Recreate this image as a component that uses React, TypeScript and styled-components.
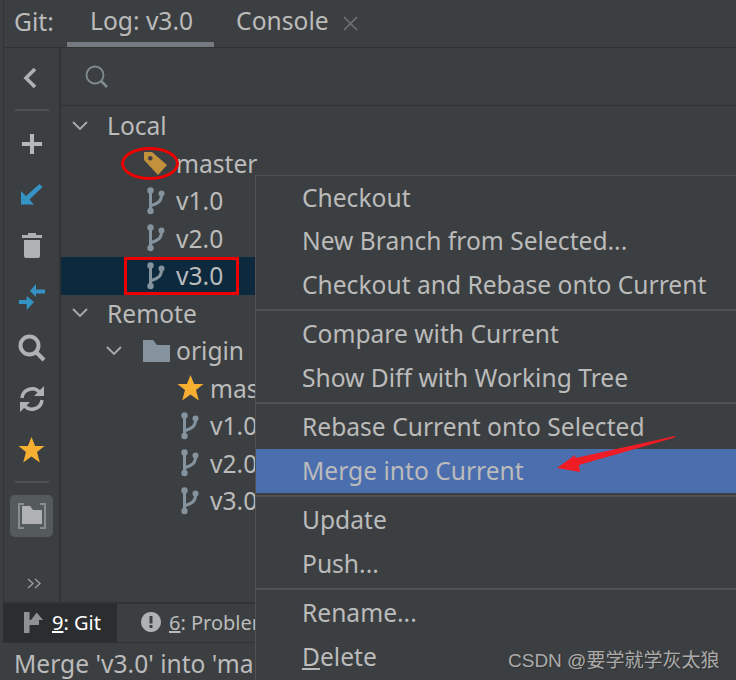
import React from 'react';
import styled, { createGlobalStyle } from 'styled-components';

const uiFont = '"Noto Sans", "Open Sans", sans-serif';

const GlobalStyle = createGlobalStyle`
    html, body {
        margin: 0;
        padding: 0;
        background: #3c3f41;
    }
`;

const BranchIcon = () => (
    <svg width="20" height="28" viewBox="0 0 20 28" fill="#84939e" stroke="none">
        <circle cx="3.500" cy="3.500" r="3.200" />
        <circle cx="3.500" cy="24" r="3.200" />
        <circle cx="14.500" cy="6.500" r="3" />
        <path d="M3.500 4v19" stroke="#84939e" strokeWidth="3" fill="none" />
        <path d="M14.500 8c0 6-3 8-10 10.500" stroke="#84939e" strokeWidth="3" fill="none" />
    </svg>
);

const TagIcon = () => (
    <svg width="24" height="26" viewBox="0 0 24 26">
        <path
            fillRule="evenodd"
            fill="#c2913c"
            d="M1 2h8l15 13-9 10L1 10zM7.300 6a2.300 2.300 0 1 0 .01 0z"
        />
    </svg>
);

const StarIcon = () => (
    <svg width="27" height="26" viewBox="0 0 27 26">
        <path fill="#f7af32" d="M13.500 0l3.600 9h9.400l-7.500 6 2.800 10.500-8.300-6-8.300 6L8 15 .5 9h9.400z" />
    </svg>
);

const FolderIcon = () => (
    <svg width="27" height="22" viewBox="0 0 27 22">
        <path fill="#84939e" d="M0 0h10l4 5h13v17H0z" />
    </svg>
);

const toolbarIcons: Record<string, JSX.Element> = {
    add: (
        <svg width="20" height="20" viewBox="0 0 20 20">
            <path fill="#b4b6b8" d="M8 0h4v8h8v4h-8v8H8v-8H0V8h8z" />
        </svg>
    ),
    checkout: (
        <svg width="22" height="21" viewBox="0 0 22 21">
            <path fill="#3592c4" d="M0 7l5 5L18.500 0l3 3L8.500 15.500 13 20.500H0z" />
        </svg>
    ),
    trash: (
        <svg width="20" height="25" viewBox="0 0 20 25">
            <path fill="#afb1b3" d="M6 0h8v2h6v3H0V2h6zM2 7h16v16a2 2 0 0 1-2 2H4a2 2 0 0 1-2-2z" />
        </svg>
    ),
    merge: (
        <svg width="26" height="26" viewBox="0 0 26 26">
            <path
                fill="#3592c4"
                d="M11 7l6-7v5.500h9v4h-9V13zM15 18l-7.300-6v4H0v4h7.700v6z"
            />
        </svg>
    ),
    search: (
        <svg width="28" height="28" viewBox="0 0 28 28" fill="none" stroke="#afb1b3" strokeWidth="4">
            <circle cx="11.500" cy="11.500" r="9" />
            <path d="M18 18l8 8" />
        </svg>
    ),
    refresh: (
        <svg width="26" height="26" viewBox="0 0 26 26" fill="none" stroke="#afb1b3" strokeWidth="3.500">
            <path d="M3 12A10 10 0 0 1 21 7" />
            <path d="M23 14A10 10 0 0 1 5 19" />
            <path fill="#afb1b3" stroke="none" d="M25 0v10h-10zM1 26V16h10z" />
        </svg>
    ),
    star: <StarIcon />,
};

const toolbarSlots = ['add', 'checkout', 'trash', 'merge', 'search', 'refresh', 'star'];

interface TreeRowData {
    label: string;
    depth: number;
    icon?: 'branch' | 'tag' | 'star' | 'folder';
    chevron?: boolean;
    selected?: boolean;
}

const treeRows: TreeRowData[] = [
    { label: 'Local', depth: 0, chevron: true },
    { label: 'master', depth: 1, icon: 'tag' },
    { label: 'v1.0', depth: 1, icon: 'branch' },
    { label: 'v2.0', depth: 1, icon: 'branch' },
    { label: 'v3.0', depth: 1, icon: 'branch', selected: true },
    { label: 'Remote', depth: 0, chevron: true },
    { label: 'origin', depth: 1, icon: 'folder', chevron: true },
    { label: 'mas', depth: 2, icon: 'star' },
    { label: 'v1.0', depth: 2, icon: 'branch' },
    { label: 'v2.0', depth: 2, icon: 'branch' },
    { label: 'v3.0', depth: 2, icon: 'branch' },
];

const menuGroups: React.ReactNode[][] = [
    ['Checkout', 'New Branch from Selected...', 'Checkout and Rebase onto Current'],
    ['Compare with Current', 'Show Diff with Working Tree'],
    ['Rebase Current onto Selected', 'Merge into Current'],
    ['Update', 'Push...'],
    ['Rename...', <><u>D</u>elete</>],
];

const Tree = () => (
    <TreeList>
        {treeRows.map((row, i) => (
            <TreeRow key={i} selected={row.selected}>
                <Indent depth={row.depth} />
                <ChevronSlot>
                    {row.chevron && (
                        <svg width="16" height="10" viewBox="0 0 16 10" fill="none" stroke="#a9abad" strokeWidth="1.800">
                            <path d="M1 1l7 7 7-7" />
                        </svg>
                    )}
                </ChevronSlot>
                {row.icon && (
                    <IconSlot shift={row.icon === 'branch' ? 6 : 2}>
                        {row.icon === 'branch' && <BranchIcon />}
                        {row.icon === 'tag' && <TagIcon />}
                        {row.icon === 'star' && <StarIcon />}
                        {row.icon === 'folder' && <FolderIcon />}
                    </IconSlot>
                )}
                <TreeLabel>{row.label}</TreeLabel>
            </TreeRow>
        ))}
    </TreeList>
);

const Menu = () => (
    <MenuPanel>
        {menuGroups.map((group, g) => (
            <React.Fragment key={g}>
                {g > 0 && <MenuSeparator />}
                {group.map((item, i) => (
                    <MenuItem key={i} active={item === 'Merge into Current'}>
                        {item}
                    </MenuItem>
                ))}
            </React.Fragment>
        ))}
    </MenuPanel>
);

const Annotations = () => (
    <>
        <Ring />
        <RedBox />
        <ArrowSvg width="120" height="38" viewBox="0 0 120 38">
            <path fill="#ee1c25" d="M118 0L18.500 22 18 19 0 32 23 36 22 29 118 1.500z" />
        </ArrowSvg>
    </>
);

export default function App() {
    return (
        <Page>
            <GlobalStyle />
            <TabBar>
                <TabBarTitle>Git:</TabBarTitle>
                <Tab active>Log: v3.0</Tab>
                <Tab>
                    Console
                    <CloseMark width="15" height="15" viewBox="0 0 15 15" stroke="#6e7072" strokeWidth="1.600">
                        <path d="M1 1l13 13M14 1L1 14" />
                    </CloseMark>
                </Tab>
            </TabBar>
            <Body>
                <Toolbar>
                    <BackSlot>
                        <svg width="14" height="22" viewBox="0 0 14 22" fill="none" stroke="#afb1b3" strokeWidth="3.600">
                            <path d="M12 2L3 11l9 9" />
                        </svg>
                    </BackSlot>
                    <ToolbarSeparator />
                    {toolbarSlots.map((name) => (
                        <ToolSlot key={name}>{toolbarIcons[name]}</ToolSlot>
                    ))}
                    <ToolbarSeparator lower />
                    <ToggleButton>
                        <svg width="28" height="26" viewBox="0 0 28 26">
                            <path fill="none" stroke="#8a8d8f" strokeWidth="2" d="M6 1H1v24h5M22 1h5v24h-5" />
                            <path fill="#afb1b3" d="M4 3h8l3 4h9v14H4z" />
                        </svg>
                    </ToggleButton>
                    <MoreMark>
                        <svg width="14" height="11" viewBox="0 0 14 11" fill="none" stroke="#9a9c9e" strokeWidth="1.400">
                            <path d="M1 1l5 4.500-5 4.500M8 1l5 4.500-5 4.500" />
                        </svg>
                    </MoreMark>
                </Toolbar>
                <BranchPanel>
                    <SearchRow>
                        <svg width="24" height="24" viewBox="0 0 24 24" fill="none" stroke="#7f8b91" strokeWidth="1.800">
                            <circle cx="10" cy="10" r="8.500" />
                            <path d="M16 16l6 6" strokeWidth="2.600" />
                        </svg>
                    </SearchRow>
                    <Tree />
                </BranchPanel>
            </Body>
            <BottomBar>
                <BottomTab active>
                    <svg width="20" height="22" viewBox="0 0 20 22">
                        <path fill="#8f9193" d="M0 1h5.500v21H0zM5.500 9H15v5H5.500zM12.700 1.500L19 9H7z" />
                    </svg>
                    <span>
                        <u>9</u>: Git
                    </span>
                </BottomTab>
                <BottomTab>
                    <svg width="20" height="20" viewBox="0 0 20 20">
                        <path
                            fillRule="evenodd"
                            fill="#afb1b3"
                            d="M10 0a10 10 0 1 0 .01 0zM8.500 4h3v7.500h-3zM8.500 13h3v3h-3z"
                        />
                    </svg>
                    <span>
                        <u>6</u>: Problem
                    </span>
                </BottomTab>
            </BottomBar>
            <StatusBar>Merge 'v3.0' into 'ma</StatusBar>
            <Menu />
            <Annotations />
            <Watermark>CSDN @要学就学灰太狼</Watermark>
        </Page>
    );
}

const Page = styled.div`
    position: relative;
    width: 736px;
    height: 680px;
    overflow: hidden;
    background: #3c3f41;
    color: #bbbbbb;
    font-family: ${uiFont};
    font-size: 24.6px;
    display: flex;
    flex-direction: column;
`;

const TabBar = styled.div`
    height: 47px;
    box-sizing: border-box;
    border-left: 1px solid #323232;
    margin-left: 3px;
    padding-left: 10px;
    display: flex;
    align-items: stretch;
    flex-shrink: 0;
`;

const TabBarTitle = styled.div`
    line-height: 44px;
    width: 53px;
`;

const Tab = styled.div<{ active?: boolean }>`
    line-height: 44px;
    padding: 0 21px 0 23px;
    display: flex;
    gap: 14px;
    align-items: center;
    height: 47px;
    box-sizing: border-box;
    border-bottom: 5px solid ${(props) => (props.active ? '#747a80' : 'transparent')};

    &:last-child {
        padding-left: 22px;
    }
`;

const CloseMark = styled.svg`
    margin-top: 4px;
`;

const Body = styled.div`
    flex: 1;
    min-height: 0;
    display: flex;
    border-top: 1px solid #323232;
    margin-left: 3px;
    border-left: 1px solid #323232;
`;

const Toolbar = styled.div`
    width: 55px;
    flex-shrink: 0;
    border-right: 2px solid #323232;
    display: flex;
    flex-direction: column;
    align-items: center;
`;

const BackSlot = styled.div`
    height: 60px;
    padding-right: 3px;
    display: flex;
    align-items: center;
    justify-content: center;
    flex-shrink: 0;
`;

const ToolbarSeparator = styled.div<{ lower?: boolean }>`
    width: 34px;
    height: 2px;
    margin: ${(props) => (props.lower ? '6px' : '1px')} 0 7px;
    background: #515151;
    flex-shrink: 0;
`;

const ToolSlot = styled.div`
    height: 51px;
    display: flex;
    align-items: center;
    justify-content: center;
    flex-shrink: 0;
`;

const ToggleButton = styled.div`
    width: 43px;
    height: 42px;
    margin-top: 5px;
    border-radius: 5px;
    background: #555a5d;
    display: flex;
    align-items: center;
    justify-content: center;
    flex-shrink: 0;
`;

const MoreMark = styled.div`
    margin-top: auto;
    margin-bottom: 6px;
    padding-left: 4px;
`;

const BranchPanel = styled.div`
    flex: 1;
    min-width: 0;
    display: flex;
    flex-direction: column;
`;

const SearchRow = styled.div`
    height: 58px;
    box-sizing: border-box;
    border-bottom: 1px solid #323232;
    padding-left: 24px;
    display: flex;
    align-items: center;
    flex-shrink: 0;
`;

const TreeList = styled.div`
    padding-top: 1px;
`;

const TreeRow = styled.div<{ selected?: boolean }>`
    height: 37.5px;
    display: flex;
    align-items: center;
    white-space: nowrap;
    background: ${(props) => (props.selected ? '#0d293e' : 'transparent')};
`;

const Indent = styled.div<{ depth: number }>`
    width: ${(props) => props.depth * 34}px;
    flex-shrink: 0;
`;

const ChevronSlot = styled.div`
    width: 46px;
    padding-left: 11px;
    box-sizing: border-box;
    flex-shrink: 0;
    display: flex;
    align-items: center;
`;

const IconSlot = styled.div<{ shift: number }>`
    width: 35px;
    padding-left: ${(props) => props.shift}px;
    box-sizing: border-box;
    flex-shrink: 0;
    display: flex;
    align-items: center;
`;

const TreeLabel = styled.span``;

const BottomBar = styled.div`
    height: 41px;
    margin-left: 3px;
    box-sizing: border-box;
    border-top: 2px solid #323232;
    border-bottom: 1px solid #323232;
    display: flex;
    font-size: 20px;
    flex-shrink: 0;
`;

const BottomTab = styled.div<{ active?: boolean }>`
    width: ${(props) => (props.active ? '114px' : 'auto')};
    box-sizing: border-box;
    padding-left: ${(props) => (props.active ? '21px' : '24px')};
    padding-bottom: 2px;
    display: flex;
    align-items: center;
    gap: 8px;
    flex-shrink: 0;
    background: ${(props) => (props.active ? '#2b2d2e' : 'transparent')};
    color: ${(props) => (props.active ? '#ffffff' : '#bbbbbb')};
    white-space: nowrap;
`;

const StatusBar = styled.div`
    height: 37px;
    box-sizing: border-box;
    padding: 3px 0 0 14px;
    line-height: 35px;
    white-space: nowrap;
    flex-shrink: 0;
`;

const MenuPanel = styled.div`
    position: absolute;
    left: 255px;
    top: 175px;
    width: 481px;
    height: 505px;
    box-sizing: border-box;
    background: #3c3f41;
    border-left: 1px solid #515151;
    border-top: 1px solid #515151;
`;

const MenuItem = styled.div<{ active?: boolean }>`
    height: 44px;
    line-height: 43px;
    padding-left: 46px;
    white-space: nowrap;
    background: ${(props) => (props.active ? '#4b6eaf' : 'transparent')};

    &:first-child {
        height: 43px;
    }
`;

const MenuSeparator = styled.div`
    height: 5px;
    display: flex;
    align-items: center;

    &::after {
        content: '';
        flex: 1;
        height: 2px;
        background: #515151;
    }
`;

const Ring = styled.div`
    position: absolute;
    left: 121px;
    top: 147px;
    width: 58px;
    height: 33px;
    box-sizing: border-box;
    border: 3px solid #ee0000;
    border-radius: 50%;
`;

const RedBox = styled.div`
    position: absolute;
    left: 124px;
    top: 257px;
    width: 115px;
    height: 38px;
    box-sizing: border-box;
    border: 3px solid #ee0000;
`;

const ArrowSvg = styled.svg`
    position: absolute;
    left: 557px;
    top: 436px;
`;

const Watermark = styled.div`
    position: absolute;
    left: 508px;
    top: 648px;
    font-family: "Liberation Sans", "Noto Sans CJK SC", sans-serif;
    font-size: 19px;
    line-height: 26px;
    color: #ababab;
    text-shadow: 1px 1px 1px #333333;
    white-space: nowrap;
`;
